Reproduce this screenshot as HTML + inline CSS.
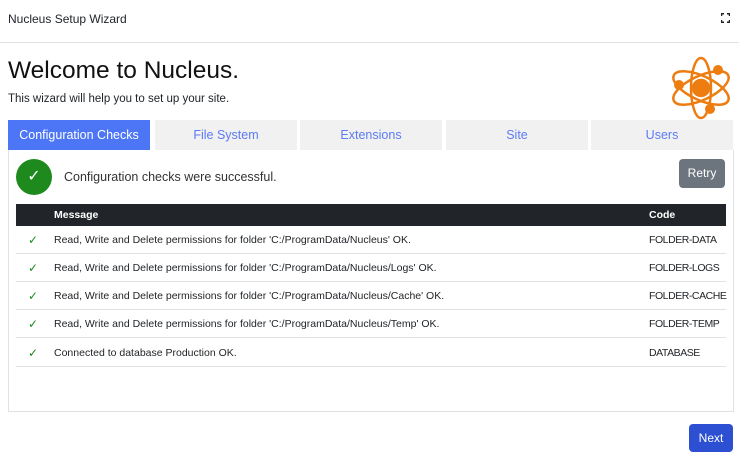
<!DOCTYPE html>
<html><head><style>
*{box-sizing:border-box;margin:0;padding:0}
body{width:739px;height:463px;background:#fff;font-family:"Liberation Sans",sans-serif;color:#212529;position:relative;overflow:hidden}
.abs{position:absolute;white-space:nowrap}
.hdr{left:0;top:0;width:739px;height:43px;border-bottom:1px solid #dee2e6}
.tab{top:120px;height:30px;width:142px;background:#f1f1f1;color:#5d7bf2;font-size:12.5px;text-align:center;line-height:30px}
.panel{left:8px;top:150px;width:726px;height:262px;border:1px solid #dee2e6;border-top:none}
.row{left:16px;width:710px;height:28px;border-bottom:1px solid #dee2e6;font-size:10.5px;line-height:28px}
.row .ck{position:absolute;left:12px;color:#1e8a1e;font-size:12px}
.row .m{position:absolute;left:38px}
.row .c{position:absolute;left:633px;letter-spacing:-0.45px}
</style></head><body>
<div class="abs hdr"></div>
<div class="abs" style="left:8px;top:12px;font-size:12px">Nucleus Setup Wizard</div>
<svg class="abs" style="left:721px;top:13px" width="9" height="10" viewBox="0 0 9 10" fill="none" stroke="#222" stroke-width="1.5"><path d="M0.5 3V0.8H3M6 0.8H8.5V3M8.5 7V9.2H6M3 9.2H0.5V7"/></svg>
<div class="abs" style="left:8px;top:57px;font-size:24.5px;color:#111">Welcome to Nucleus.</div>
<div class="abs" style="left:8px;top:93px;font-size:11.5px">This wizard will help you to set up your site.</div>
<svg class="abs" style="left:668px;top:54px" width="66" height="66" viewBox="0 0 66 66" fill="none" stroke="#ee7d11" stroke-width="2.5">
<ellipse cx="33" cy="34" rx="30" ry="12" transform="rotate(25 33 34)"/>
<ellipse cx="33" cy="34" rx="30" ry="12" transform="rotate(-25 33 34)"/>
<ellipse cx="33" cy="34" rx="10" ry="30"/>
<circle cx="33" cy="34" r="8" fill="#ee7d11"/>
<circle cx="50" cy="16" r="5" fill="#ee7d11" stroke="none"/>
<circle cx="11" cy="31" r="5" fill="#ee7d11" stroke="none"/>
<circle cx="42" cy="55" r="5" fill="#ee7d11" stroke="none"/>
</svg>
<div class="abs tab" style="left:8px;background:#4d76f7;color:#fff">Configuration Checks</div>
<div class="abs tab" style="left:155px">File System</div>
<div class="abs tab" style="left:300px">Extensions</div>
<div class="abs tab" style="left:446px">Site</div>
<div class="abs tab" style="left:591px">Users</div>
<div class="abs panel"></div>
<div class="abs" style="left:16px;top:159px;width:36px;height:36px;border-radius:50%;background:#1e8a1e;color:#fff;text-align:center;line-height:36px;font-size:16px">✓</div>
<div class="abs" style="left:64px;top:170px;font-size:12.5px;color:#333">Configuration checks were successful.</div>
<div class="abs" style="left:679px;top:159px;width:46px;height:29px;background:#6c757d;border-radius:4px;color:#fff;font-size:12px;text-align:center;line-height:29px">Retry</div>
<div class="abs" style="left:16px;top:204px;width:710px;height:22px;background:#212529;color:#fff;font-size:10.5px;font-weight:bold;line-height:22px"><span style="position:absolute;left:38px">Message</span><span style="position:absolute;left:633px">Code</span></div>
<div class="abs row" style="top:226px"><span class="ck">✓</span><span class="m">Read, Write and Delete permissions for folder 'C:/ProgramData/Nucleus' OK.</span><span class="c">FOLDER-DATA</span></div>
<div class="abs row" style="top:254px"><span class="ck">✓</span><span class="m">Read, Write and Delete permissions for folder 'C:/ProgramData/Nucleus/Logs' OK.</span><span class="c">FOLDER-LOGS</span></div>
<div class="abs row" style="top:282px"><span class="ck">✓</span><span class="m">Read, Write and Delete permissions for folder 'C:/ProgramData/Nucleus/Cache' OK.</span><span class="c">FOLDER-CACHE</span></div>
<div class="abs row" style="top:310px"><span class="ck">✓</span><span class="m">Read, Write and Delete permissions for folder 'C:/ProgramData/Nucleus/Temp' OK.</span><span class="c">FOLDER-TEMP</span></div>
<div class="abs row" style="top:339px"><span class="ck">✓</span><span class="m">Connected to database Production OK.</span><span class="c">DATABASE</span></div>
<div class="abs" style="left:689px;top:424px;width:44px;height:28px;background:#2d4fd1;border-radius:4px;color:#fff;font-size:12px;text-align:center;line-height:28px">Next</div>
</body></html>
